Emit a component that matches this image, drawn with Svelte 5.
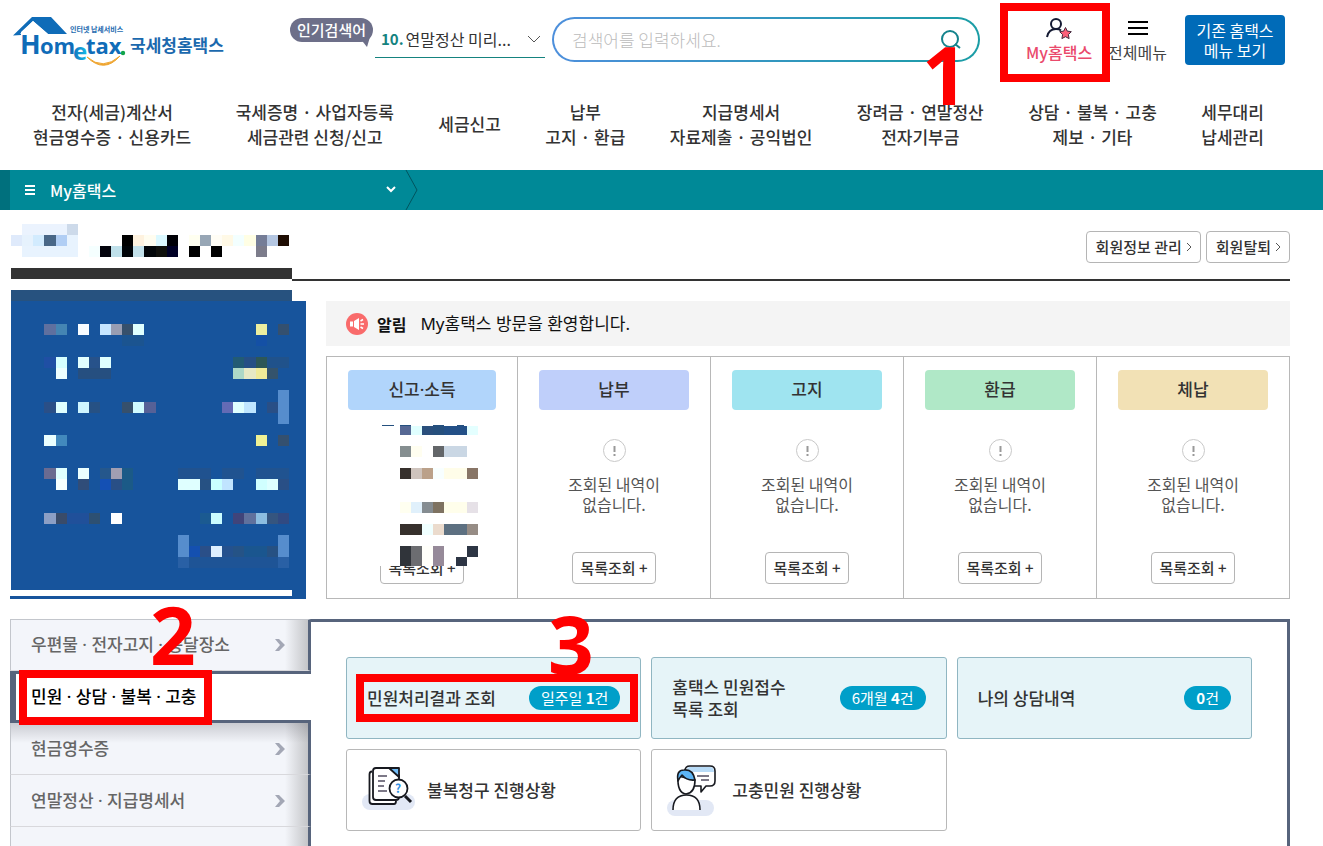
<script lang="ts">
	type Cell = [x: number, y: number, color: string, w?: number, h?: number];

	const menus = [
		['전자(세금)계산서', '현금영수증 · 신용카드'],
		['국세증명 · 사업자등록', '세금관련 신청/신고'],
		['세금신고'],
		['납부', '고지 · 환급'],
		['지급명세서', '자료제출 · 공익법인'],
		['장려금 · 연말정산', '전자기부금'],
		['상담 · 불복 · 고충', '제보 · 기타'],
		['세무대리', '납세관리']
	];

	const statuses = [
		{ name: '신고·소득', color: '#b1d5fb', masked: true },
		{ name: '납부', color: '#bfcffa' },
		{ name: '고지', color: '#9fe4f0' },
		{ name: '환급', color: '#b0e8c7' },
		{ name: '체납', color: '#f2e1b5' }
	];

	const sideItems = [
		{ name: '우편물 · 전자고지 · 송달장소' },
		{ name: '민원 · 상담 · 불복 · 고충', active: true },
		{ name: '현금영수증' },
		{ name: '연말정산 · 지급명세서' }
	];

	const counts = [
		{ lines: ['민원처리결과 조회'], period: '일주일 ', count: 1, step: 3 },
		{ lines: ['홈택스 민원접수', '목록 조회'], period: '6개월 ', count: 4 },
		{ lines: ['나의 상담내역'], period: '', count: 0 }
	];

	const nameCells: Cell[] = [
		[22, 224, '#ebf3fe', 45], [67, 224, '#cddaea'],
		[11, 235, '#dfeafb'], [22, 235, '#e6f2fd'], [33, 235, '#d2ebfe'], [44, 235, '#496787', 12],
		[56, 235, '#b1cef4'], [67, 235, '#e8f3fe'], [122, 235, '#000'], [133, 235, '#fef2df'],
		[144, 235, '#fffdf0', 12], [156, 235, '#dbf8ff'], [167, 235, '#000006'], [189, 235, '#fffff0'],
		[200, 235, '#97a6b5'], [211, 235, '#fffdf5'], [222, 235, '#fff9e6'], [233, 235, '#f3ffff'],
		[244, 235, '#fffee4', 12], [256, 235, '#757d97'], [267, 235, '#b4c6e1'], [278, 235, '#1f0d03'],
		[22, 246, '#e8f3fe', 56], [89, 246, '#f5ffff'], [100, 246, '#03030c'], [111, 246, '#bfe0ea'],
		[122, 246, '#000408'], [133, 246, '#c3e1ea'], [144, 246, '#020609', 12], [156, 246, '#0f100c'],
		[167, 246, '#000026'], [189, 246, '#000'], [211, 246, '#000'], [256, 246, '#7c7c8b'],
		[11, 268, '#333', 281]
	];

	const summaryCells: Cell[] = [
		[11, 290, '#27527f', 281], [11, 301, '#17549c', 295, 298],
		[44, 324, '#5f709f', 12], [56, 324, '#4585b3'], [78, 324, '#f8fcff'], [100, 324, '#c5e5ff'],
		[111, 324, '#989db2'], [122, 324, '#36506c'], [133, 324, '#dfffff'], [256, 324, '#ecee9f'],
		[278, 324, '#34506f'], [256, 335, '#1450a5'], [122, 335, '#1b5490', 22],
		[44, 357, '#1f4fa4', 12], [56, 357, '#d5ffff'], [78, 357, '#e2ffff'], [89, 357, '#27528a'],
		[100, 357, '#dfffff'], [233, 357, '#225b74'], [244, 357, '#264f85', 12], [256, 357, '#2d5757'],
		[267, 357, '#20528b', 22], [56, 368, '#edffff'], [78, 368, '#264f80', 33],
		[233, 368, '#add8c7'], [244, 368, '#e7e9c5', 12], [256, 368, '#f0eb98'], [267, 368, '#34536c'],
		[278, 390, '#568dcd', 11, 34],
		[44, 402, '#2a4f87', 12], [56, 402, '#dfffff'], [78, 402, '#cef5ff'], [89, 402, '#265184'],
		[122, 402, '#36506c'], [133, 402, '#d1fbff'], [144, 402, '#566197', 12], [222, 402, '#636bb5'],
		[233, 402, '#dfffff'], [244, 402, '#bfe6ff', 12], [267, 402, '#294f86'],
		[44, 435, '#ebffff', 12], [56, 435, '#4289bd'], [256, 435, '#eff194'], [278, 435, '#34506f'],
		[44, 468, '#6a6b91', 12], [56, 468, '#dfffff'], [78, 468, '#ebffff'], [100, 468, '#25578c'],
		[111, 468, '#a09eb2'], [122, 468, '#1b5a87', 11, 22], [178, 468, '#20528f', 33],
		[222, 468, '#205390', 22], [256, 468, '#205390', 33], [56, 479, '#f5ffff'],
		[78, 479, '#304d79'], [100, 479, '#1450b4'], [111, 479, '#294f86'], [178, 479, '#dfffff', 22],
		[200, 479, '#265183'], [211, 479, '#c9ffff'], [222, 479, '#c0e4ff'], [256, 479, '#d0ffff'],
		[267, 479, '#dfffff'], [278, 479, '#294f86'],
		[44, 513, '#8c9fc5', 12], [56, 513, '#394b69'], [67, 513, '#20509a', 22], [89, 513, '#2d5072'],
		[111, 513, '#fff'], [200, 513, '#1b5a91'], [211, 513, '#cafcff'], [233, 513, '#40447a'],
		[244, 513, '#60719d', 12], [256, 513, '#8cbde0'], [267, 513, '#35557f'], [278, 513, '#314a82'],
		[178, 535, '#568dcd', 11, 22], [278, 535, '#568dcd', 11, 22],
		[189, 546, '#1450b0'], [200, 546, '#2a4f88'], [211, 546, '#ddefff'], [222, 546, '#24518e'],
		[233, 546, '#255386'], [244, 546, '#1a568f', 23], [267, 546, '#265183'],
		[178, 557, '#2960a5', 111], [189, 557, '#1e5496', 89],
		[10, 590, '#fff', 282, 6], [10, 596, '#17549c', 282, 3]
	];

	const reportCells: Cell[] = [
		[382, 425, '#24507f', 12, 1], [400, 425, '#24507f', 11, 1], [433, 425, '#24507f', 11, 1], [457, 425, '#24507f', 7, 1],
		[400, 426, '#566894', 11, 9], [411, 426, '#e0ffff', 11, 9], [422, 426, '#2a4f7c', 11, 9],
		[433, 426, '#26507d', 11, 9], [444, 426, '#235087', 23, 9], [467, 426, '#e4ffff', 11, 9],
		[400, 446, '#858e90'], [411, 446, '#fffef0'], [433, 446, '#636669'], [444, 446, '#cad7e4', 23],
		[400, 468, '#36302c'], [411, 468, '#cfc4bd'], [422, 468, '#bba18a'], [433, 468, '#f8ffff'],
		[444, 468, '#fffde9', 23], [467, 468, '#887566'],
		[400, 502, '#fffff0'], [411, 502, '#e0f0fb'], [422, 502, '#858c91'], [433, 502, '#7e7261'],
		[444, 502, '#fffeeb', 23], [467, 502, '#e6e1e7'],
		[400, 524, '#36302c', 22], [422, 524, '#f0ffff'], [433, 524, '#ebdbcd'],
		[444, 524, '#5d7081', 23], [467, 524, '#968c85'],
		[400, 546, '#30343a', 11, 20], [411, 546, '#6c6d71', 11, 20], [422, 546, '#fffffa', 11, 20],
		[433, 546, '#968a99', 11, 20], [467, 546, '#2d3544'], [456, 557, '#2d3544', 11, 9]
	];
</script>

{#snippet mosaic(cells: Cell[])}
	{#each cells as [x, y, color, w = 11, h = 11]}
		<rect {x} {y} width={w} height={h} fill={color} />
	{/each}
{/snippet}

<div class="page">
	<header class="top">
		<a class="logo" href="#home" aria-label="국세청홈택스">
			<svg viewBox="12 14 212 54" width="212" height="54">
				<defs>
					<linearGradient id="letter-e" x1="0" x2="1">
						<stop offset="0" stop-color="#1371bd" />
						<stop offset="1" stop-color="#16bce8" />
					</linearGradient>
				</defs>
				<path d="M13 35.5 32 17h19l16 17H48L33 21 21 32v3z" fill="#0f6cb8" />
				<path d="M33 21 48 34H20z" fill="#fff" />
				<text class="word" x="20" y="54" font-size="27">H</text>
				<text class="word" x="40" y="54" font-size="22">om</text>
				<text class="word" x="73" y="60" font-size="24" style:fill="url(#letter-e)">e</text>
				<text class="word" x="86" y="54" font-size="22">tax</text>
				<circle cx="123" cy="53" r="2.2" fill="#12a44b" />
				<path d="M87 57q16 14 33-1-16 18-33 1z" fill="#efa52f" stroke="#efa52f" />
				<text class="ko" x="70" y="32" font-size="7">인터넷 납세서비스</text>
				<text class="ko" x="130" y="52" font-size="17">국세청홈택스</text>
			</svg>
		</a>

		<strong class="hot">인기검색어</strong>
		<label class="keyword">
			<span>10.</span>
			<select aria-label="인기검색어">
				<option>연말정산 미리...</option>
			</select>
			<svg viewBox="0 0 14 8" width="14" height="8"><path d="M1 1l6 6 6-6" /></svg>
		</label>

		<form class="search">
			<input type="search" placeholder="검색어를 입력하세요." aria-label="검색어" />
			<button type="button" aria-label="검색">
				<svg viewBox="0 0 22 22" width="22" height="22"><circle cx="10" cy="10" r="8" /><path d="M15 15l5 4" /></svg>
			</button>
		</form>

		<a class="util my" href="#my">
			<svg viewBox="0 0 26 22" width="26" height="22">
				<circle cx="10" cy="6" r="5" />
				<path d="M1 19c1-5 4-8 9-8 2 0 4 .5 5 1.500" />
				<path class="star" d="M19.500 9.500l1.800 3.600 4 .6-2.900 2.900.7 4-3.600-1.900-3.600 1.900.7-4-2.900-2.900 4-.6z" />
			</svg>
			My홈택스
			<span class="mark mark-my"></span>
			<span class="step step-1">1</span>
		</a>
		<a class="util all" href="#all">
			<svg viewBox="0 0 20 22" width="20" height="22"><path d="M0 4h20M0 10h20M0 16h20" /></svg>
			전체메뉴
		</a>
		<button class="classic">기존 홈택스<br />메뉴 보기</button>
	</header>

	<nav class="gnb">
		{#each menus as lines}
			<a href="#menu">
				{#each lines as line}<span>{line}</span>{/each}
			</a>
		{/each}
	</nav>

	<div class="location">
		<button>
			<svg viewBox="0 0 10 10" width="10" height="10"><path d="M0 1h10M0 5h10M0 9h10" /></svg>
			My홈택스
			<svg class="down" viewBox="0 0 10 8" width="10" height="8"><path d="M1 1l4 4 4-4" /></svg>
		</button>
		<svg class="edge" viewBox="0 0 14 40" width="14" height="40"><path d="M2 0l11 20L2 40" /></svg>
	</div>

	<main>
		<section class="member">
			<svg viewBox="10 210 282 71" width="282" height="71" shape-rendering="crispEdges" aria-hidden="true">
				{@render mosaic(nameCells)}
			</svg>
			<div class="member-links">
				{#each ['회원정보 관리', '회원탈퇴'] as label}
					<a href="#member">
						{label}
						<svg viewBox="0 0 6 10" width="6" height="10"><path d="M1 1l4 4-4 4" /></svg>
					</a>
				{/each}
			</div>
		</section>

		<section class="overview">
			<svg viewBox="10 290 296 309" width="296" height="309" shape-rendering="crispEdges" aria-hidden="true">
				{@render mosaic(summaryCells)}
			</svg>
			<div class="overview-body">
				<p class="notice">
					<svg viewBox="0 0 22 22" width="22" height="22">
						<circle cx="11" cy="11" r="11" fill="#f96b6b" />
						<path d="M4 8.500h3v5H4zM8 8l5-3v12l-5-3z" fill="#fff" />
						<path d="M14.500 8l2.500-1.500M14.500 11H18M14.500 14l2.500 1.500" stroke="#fff" stroke-width="1.500" />
					</svg>
					<strong>알림</strong>
					<span>My홈택스 방문을 환영합니다.</span>
				</p>
				<div class="statuses">
					{#each statuses as status}
						<article>
							<h2 style:background={status.color}>{status.name}</h2>
							{#if !status.masked}
								<div class="empty">
									<svg viewBox="0 0 23 23" width="23" height="23">
										<circle cx="11.500" cy="11.500" r="11" fill="none" stroke="#c8c8c8" />
										<path d="M11.500 7v6M11.500 15v2" stroke="#999" stroke-width="2" />
									</svg>
									<p>조회된 내역이<br />없습니다.</p>
								</div>
							{/if}
							<button>목록조회 +</button>
							{#if status.masked}
								<svg class="veil" viewBox="366 424 112 142" width="112" height="142" shape-rendering="crispEdges" aria-hidden="true">
									<rect x="366" y="424" width="112" height="142" fill="#fff" />
									{@render mosaic(reportCells)}
								</svg>
							{/if}
						</article>
					{/each}
				</div>
			</div>
		</section>

		<section class="services">
			<nav class="side">
				{#each sideItems as item}
					<a href="#service" class:active={item.active}>
						{item.name}
						{#if item.active}
							<span class="mark mark-side"></span>
							<span class="step step-2">2</span>
						{:else}
							<svg viewBox="0 0 11 12" width="11" height="12"><path d="M0 0h4l6 6-6 6H0l5-6z" /></svg>
						{/if}
					</a>
				{/each}
				<div class="rest"></div>
			</nav>
			<div class="panel">
				{#each counts as item}
					<a class="card count" href="#result">
						<span>{#each item.lines as line, i}{#if i}<br />{/if}{line}{/each}</span>
						<em>{item.period}<b>{item.count}</b>건</em>
						{#if item.step}
							<span class="mark mark-card"></span>
							<span class="step step-3">{item.step}</span>
						{/if}
					</a>
				{/each}
				<a class="card" href="#appeal">
					<svg viewBox="0 0 54 50" width="54" height="50">
						<rect x="1" y="29" width="53" height="16" rx="8" fill="#e2e8f5" />
						<g fill="#fff" stroke="#17191f" stroke-width="1.800" stroke-linejoin="round">
							<path d="M11 6.500q-2.500 0-2.500 3V36q0 3 3 3H33q2 0 2-3" />
							<path d="M15 3h17l6 7v22q0 3-3 3H15q-3 0-3-3V6q0-3 3-3z" />
							<path d="M28 3h10v9z" fill="#72bdf7" />
							<path d="M17 11h9M17 16h7M17 21h6M17 26h9" stroke="#514c60" stroke-width="1.400" />
							<path d="M44 31l6 6" stroke-width="3" />
							<circle cx="37.500" cy="23.500" r="9" />
						</g>
						<text x="34" y="28" font-size="12" font-weight="700" fill="#2f8fe0">?</text>
					</svg>
					<span>불복청구 진행상황</span>
				</a>
				<a class="card" href="#grievance">
					<svg viewBox="0 0 54 54" width="54" height="54">
						<rect x="1" y="37" width="47" height="16" rx="8" fill="#e2e8f5" />
						<g fill="#fff" stroke="#17191f" stroke-width="1.600" stroke-linejoin="round">
							<path d="M24 3h20q5 0 5 5v10q0 5-5 5h-4l-5 6v-6H24q-5 0-5-5V8q0-5 5-5z" />
							<path d="M23 4h21q4 0 4 5H20q0-4 3-5z" fill="#b9dcf8" stroke="none" />
							<path d="M31 13h12M35 17h8" stroke="#514c60" />
							<path d="M12 13q-1 17 8 18 9-1 9-14z" />
							<path d="M12 18q-2-11 6-11 9-1 11 10-8 1-13-5-2 2-4 6z" fill="#5db5f5" />
							<path d="M7 47q0-15 13.500-15T34 47" />
						</g>
					</svg>
					<span>고충민원 진행상황</span>
				</a>
			</div>
		</section>
	</main>
</div>

<style>
	:global(body) {
		background: #fff;
	}
	.page {
		display: flex;
		flex-direction: column;
		min-height: 100vh;
		overflow: hidden;
		font-family: 'Noto Sans CJK KR', sans-serif;
		font-size: 16px;
		line-height: 20px;
		color: #333;
	}
	.page *,
	.page {
		box-sizing: border-box;
	}
	svg {
		display: block;
		flex: none;
	}
	a {
		color: inherit;
		text-decoration: none;
	}
	button,
	input,
	select {
		font: inherit;
		color: inherit;
		border: 0;
		background: none;
		padding: 0;
		margin: 0;
	}
	button {
		cursor: pointer;
	}
	p,
	h2 {
		margin: 0;
	}

	.top {
		display: flex;
		align-items: flex-start;
		height: 99px;
		padding: 14px 38px 0 12px;
	}
	.logo {
		margin-right: 66px;
	}
	.word {
		font-family: 'Open Sans', sans-serif;
		font-weight: 700;
		fill: #0f6cb8;
	}
	.ko {
		font-weight: 700;
		fill: #1b69ae;
	}
	.hot {
		position: relative;
		margin: 4px 2px 0 0;
		padding: 0 7px;
		border-radius: 12px;
		background: #6d6f89;
		color: #fff;
		font-size: 15px;
		font-weight: 500;
		line-height: 24px;
		white-space: nowrap;
	}
	.hot::after {
		content: '';
		position: absolute;
		right: 3px;
		bottom: -5px;
		border: 6px solid transparent;
		border-width: 10px 3px 0 8px;
		border-top-color: #6d6f89;
	}
	.keyword {
		display: flex;
		align-items: center;
		width: 170px;
		height: 44px;
		margin-right: 7px;
		padding: 6px 4px 0 6px;
		border-bottom: 1px solid #15837f;
	}
	.keyword span {
		margin-right: 2px;
		color: #15837f;
		font-size: 15px;
		font-weight: 700;
	}
	.keyword select {
		flex: 1;
		min-width: 0;
		appearance: none;
	}
	.keyword svg {
		fill: none;
		stroke: #555;
	}
	.search {
		display: flex;
		flex: 1;
		align-items: center;
		height: 45px;
		margin: 3px 46px 0 0;
		padding: 0 16px 0 18px;
		border: 2px solid transparent;
		border-radius: 23px;
		background:
			linear-gradient(#fff, #fff) padding-box,
			linear-gradient(90deg, #4d8fdc, #1a9da5) border-box;
	}
	.search input {
		flex: 1;
		min-width: 0;
		font-size: 17px;
		font-weight: 300;
		outline: 0;
	}
	.search input::placeholder {
		color: #bbb;
		opacity: 1;
	}
	.search svg {
		fill: none;
		stroke: #15838c;
		stroke-width: 2;
	}
	.util {
		position: relative;
		display: flex;
		flex-direction: column;
		align-items: center;
		gap: 2px;
		padding-top: 4px;
		white-space: nowrap;
	}
	.util svg {
		fill: none;
		stroke: #000;
		stroke-width: 2;
	}
	.my {
		margin-right: 16px;
		color: #ea4a6c;
		font-weight: 500;
		z-index: 2;
	}
	.my svg {
		stroke: #141a33;
	}
	.my .star {
		fill: #fb6079;
		stroke: #43293d;
		stroke-width: 1;
	}
	.all {
		margin-right: 18px;
		color: #444;
	}
	.classic {
		width: 100px;
		height: 50px;
		margin-top: 1px;
		border-radius: 4px;
		background: #006bb8;
		color: #fff;
		white-space: nowrap;
	}

	.gnb {
		display: flex;
		justify-content: space-between;
		align-items: center;
		height: 71px;
		padding: 0 59px 22px 33px;
		font-size: 17px;
		font-weight: 500;
		line-height: 25px;
	}
	.gnb a {
		display: flex;
		flex-direction: column;
		align-items: center;
		white-space: nowrap;
	}

	.location {
		display: flex;
		height: 40px;
		border-left: 10px solid #00707d;
		background: #008997;
		color: #fff;
	}
	.location button {
		display: flex;
		align-items: center;
		gap: 15px;
		width: 394px;
		padding: 0 8px 0 15px;
		font-weight: 500;
	}
	.location svg {
		fill: none;
		stroke: #fff;
		stroke-width: 2;
	}
	.location .down {
		margin-left: auto;
	}
	.location .edge {
		stroke: #00545e;
		stroke-width: 1;
	}

	main {
		display: flex;
		flex: 1;
		flex-direction: column;
		padding: 0 33px 0 10px;
	}
	.member {
		display: flex;
	}
	.member-links {
		display: flex;
		flex: 1;
		justify-content: flex-end;
		align-items: flex-start;
		gap: 5px;
		padding-top: 21px;
		border-bottom: 2px solid #333;
	}
	.member-links a {
		display: flex;
		align-items: center;
		gap: 4px;
		height: 32px;
		padding: 0 8px 0 9px;
		border: 1px solid #b5b5b5;
		border-radius: 4px;
		font-size: 15px;
		font-weight: 500;
	}
	.member-links svg {
		fill: none;
		stroke: #555;
	}

	.overview {
		display: flex;
		gap: 20px;
		margin: 9px 0 20px;
	}
	.overview-body {
		display: flex;
		flex: 1;
		flex-direction: column;
		gap: 10px;
		padding-top: 11px;
	}
	.notice {
		display: flex;
		align-items: center;
		height: 45px;
		padding: 0 20px;
		background: #f4f4f4;
		color: #111;
	}
	.notice strong {
		margin: 0 14px 0 9px;
	}
	.notice span {
		font-family: 'Noto Sans', 'Noto Sans CJK KR', sans-serif;
		font-size: 17px;
	}
	.statuses {
		display: grid;
		flex: 1;
		grid-template-columns: 190fr repeat(4, 193fr);
		border: 1px solid #b8b8b8;
	}
	article {
		position: relative;
		display: flex;
		flex-direction: column;
		align-items: center;
		padding: 13px 21px 14px;
	}
	article + article {
		border-left: 1px solid #b8b8b8;
	}
	h2 {
		align-self: stretch;
		border-radius: 4px;
		font-family: 'Noto Sans', 'Noto Sans CJK KR', sans-serif;
		font-size: 17px;
		font-weight: 500;
		line-height: 40px;
		text-align: center;
	}
	.empty {
		display: flex;
		flex-direction: column;
		align-items: center;
		gap: 12px;
		margin-top: 29px;
		color: #555;
		text-align: center;
	}
	article button {
		width: 84px;
		height: 32px;
		margin-top: auto;
		border: 1px solid #b5b5b5;
		border-radius: 4px;
		font-size: 15px;
		font-weight: 500;
		white-space: nowrap;
	}
	.veil {
		position: absolute;
		bottom: 32px;
	}

	.services {
		display: flex;
		flex: 1;
	}
	.side {
		display: flex;
		flex-direction: column;
		width: 301px;
		font-family: 'Noto Sans', 'Noto Sans CJK KR', sans-serif;
	}
	.side a,
	.rest {
		position: relative;
		display: flex;
		justify-content: space-between;
		align-items: center;
		height: 52px;
		padding: 0 22px 0 20px;
		border: solid #57647c;
		border-width: 0 3px 0 0;
		border-left: 1px solid #c3c6cc;
		border-bottom: 1px solid #d8d8dc;
		background: linear-gradient(90deg, transparent 274px, #c4c5c8 297px), #f3f5fa;
		color: #666;
		font-size: 17px;
		font-weight: 500;
		white-space: nowrap;
	}
	.side a:first-child {
		border-top: 1px solid #c3c6cc;
	}
	.side svg {
		fill: #a3a7b5;
	}
	.side .active {
		z-index: 2;
		padding-left: 15px;
		border: solid #57647c;
		border-width: 3px 0 3px 6px;
		background: #fff;
		color: #000;
	}
	.side .active + a {
		background:
			linear-gradient(rgba(80, 80, 90, 0.25), transparent 20px),
			linear-gradient(90deg, transparent 274px, #c4c5c8 297px),
			#f3f5fa;
	}
	.side .rest {
		flex: 1;
		height: auto;
		border-bottom: 0;
	}
	.panel {
		display: grid;
		flex: 1;
		grid-template-columns: repeat(3, 1fr);
		grid-auto-rows: 82px;
		gap: 10px;
		margin-left: -3px;
		padding: 35px 35px 15px 38px;
		border: solid #57647c;
		border-width: 3px 3px 0 0;
	}
	.card {
		position: relative;
		display: flex;
		align-items: center;
		gap: 12px;
		padding: 0 14px;
		border: 1px solid #b8b8b8;
		border-radius: 3px;
		font-size: 17px;
		font-weight: 500;
		line-height: 22px;
	}
	.count {
		justify-content: space-between;
		padding: 0 20px;
		border-color: #90b6c2;
		background: #e6f4f8;
	}
	.count em {
		padding: 0 12px;
		border-radius: 12px;
		background: #009fc9;
		color: #fff;
		font-size: 15px;
		font-style: normal;
		font-weight: 400;
		line-height: 24px;
	}

	/* numbered walkthrough marks */
	.mark {
		position: absolute;
		border: 8px solid #f00;
		pointer-events: none;
	}
	.mark-my {
		inset: -11px -18px -20px -26px;
	}
	.mark-side {
		inset: -4px 99px -5px 3px;
	}
	.mark-card {
		inset: 16px 2px 16px 9px;
	}
	.step {
		position: absolute;
		color: #f00;
		font-family: 'Open Sans', sans-serif;
		font-size: 80px;
		font-weight: 700;
		line-height: 80px;
		pointer-events: none;
		z-index: 3;
	}
	.step-1 {
		top: 20px;
		left: -104px;
	}
	.step-2 {
		top: -80px;
		left: 134px;
	}
	.step-3 {
		top: -55px;
		left: 201px;
	}
</style>
